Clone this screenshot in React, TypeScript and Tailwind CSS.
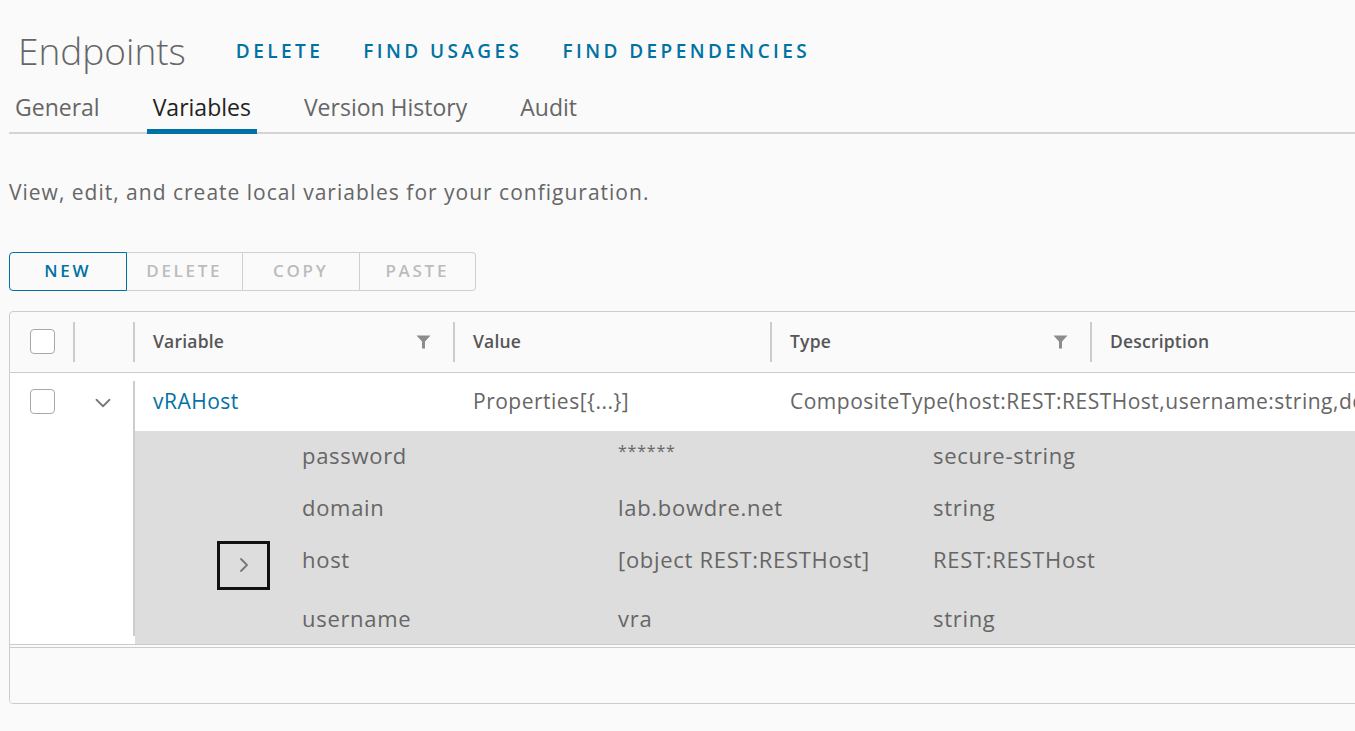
import { ChevronDown, ChevronRight } from 'lucide-react';

const font = { fontFamily: '"Open Sans", "Liberation Sans", sans-serif' };

const FilterIcon = () => (
  <svg width="15" height="14" viewBox="0 0 15 14" className="shrink-0">
    <path d="M0.5 0.5 H14.5 L9 6.5 V13.5 H6 V6.5 Z" fill="#8c8c8c" />
  </svg>
);

const Checkbox = () => (
  <div className="w-[25px] h-[25px] rounded-[4px] border border-[#a8a8a8] bg-white" />
);

const HeaderCell = ({ label, width, filter }: { label: string; width?: string; filter?: boolean }) => (
  <div className={`flex items-center h-full ${width ?? 'flex-1'}`}>
    <div className="w-[2px] h-[40px] bg-[#cccccc]" />
    <div className="flex-1 flex items-center justify-between pl-[18px] pr-[22px]">
      <span className="text-[17.5px] font-semibold text-[#565656] tracking-[0.2px]">{label}</span>
      {filter && <FilterIcon />}
    </div>
  </div>
);

const details = [
  { name: 'password', value: '******', type: 'secure-string', row: 'h-[48px] items-center' },
  { name: 'domain', value: 'lab.bowdre.net', type: 'string', row: 'h-[56px] items-center' },
  { name: 'host', value: '[object REST:RESTHost]', type: 'REST:RESTHost', row: 'h-[48px] items-center', expand: true },
  { name: 'username', value: 'vra', type: 'string', row: 'flex-1 items-start pt-[20px]' },
];

export default function App() {
  return (
    <div className="w-[1355px] h-[731px] overflow-hidden bg-[#fafafa] text-[#666666]" style={font}>
      {/* title bar */}
      <div className="flex items-center h-[70px] pt-[30px] pl-[18px]">
        <h1 className="text-[37px] font-light text-[#666666] leading-none mr-[50px]">Endpoints</h1>
        <div className="flex items-center gap-[40px] pt-[2px]">
          {['DELETE', 'FIND USAGES', 'FIND DEPENDENCIES'].map(t => (
            <span key={t} className="text-[19px] font-semibold tracking-[0.18em] text-[#0072a3]">
              {t}
            </span>
          ))}
        </div>
      </div>

      {/* tabs */}
      <div className="flex ml-[9px] mt-[14px] border-b-2 border-[#d4d4d4] h-[50px]">
        {['General', 'Variables', 'Version History', 'Audit'].map((t, i) => (
          <div
            key={t}
            className={`flex items-center px-[6px] mr-[41px] -mb-[2px] text-[23px] ${
              i === 1 ? 'border-b-[5px] border-[#0072a3] text-[#222222] pt-[1px]' : 'text-[#666666] pb-[4px]'
            }`}
          >
            {t}
          </div>
        ))}
      </div>

      <p className="ml-[9px] mt-[43px] text-[21px] tracking-[1px] text-[#666666]">
        View, edit, and create local variables for your configuration.
      </p>

      {/* button group */}
      <div className="flex ml-[9px] mt-[43px] h-[39px] w-[467px]">
        <div className="flex-1 flex items-center justify-center border border-[#0072a3] rounded-l-[4px] text-[17px] font-semibold tracking-[0.16em] text-[#0072a3]">
          NEW
        </div>
        {['DELETE', 'COPY', 'PASTE'].map((t, i) => (
          <div
            key={t}
            className={`flex-1 flex items-center justify-center border-y border-r border-[#d0d0d0] text-[17px] font-semibold tracking-[0.16em] text-[#bcbcbc] ${
              i === 2 ? 'rounded-r-[4px]' : ''
            }`}
          >
            {t}
          </div>
        ))}
      </div>

      {/* datagrid */}
      <div className="ml-[9px] mt-[20px] w-[1420px] h-[393px] border border-[#cccccc] rounded-[4px] overflow-hidden flex flex-col">
        <div className="flex items-center h-[61px] border-b border-[#cccccc] shrink-0">
          <div className="w-[63px] flex justify-center pl-[2px]">
            <Checkbox />
          </div>
          <HeaderCell label="" width="w-[60px]" />
          <HeaderCell label="Variable" width="w-[320px]" filter />
          <HeaderCell label="Value" width="w-[317px]" />
          <HeaderCell label="Type" width="w-[320px]" filter />
          <HeaderCell label="Description" />
        </div>

        {/* row */}
        <div className="flex h-[272px] bg-white border-b border-[#cccccc] shrink-0">
          <div className="w-[123px] flex items-start pt-[16px]">
            <div className="w-[63px] flex justify-center pl-[2px]">
              <Checkbox />
            </div>
            <div className="w-[60px] flex justify-center pt-[1px]">
              <ChevronDown size={26} strokeWidth={1.7} color="#7a7a7a" />
            </div>
          </div>
          <div className="w-[2px] mt-[8px] mb-[8px] bg-[#cccccc]" />
          <div className="flex-1 flex flex-col">
            <div className="flex items-center h-[58px] text-[21px] tracking-[0.5px] shrink-0">
              <div className="w-[318px] pl-[18px] text-[#0072a3]">vRAHost</div>
              <div className="w-[319px] pl-[20px]">Properties[{'{...}'}]</div>
              <div className="flex-1 pl-[18px] whitespace-nowrap overflow-hidden">
                CompositeType(host:REST:RESTHost,username:string,do
              </div>
            </div>
            <div className="flex-1 bg-[#dddddd] flex flex-col text-[22px] leading-[30px] tracking-[0.7px] text-[#666666]">
              {details.map(d => (
                <div key={d.name} className={`flex ${d.row}`}>
                  <div className="w-[167px] pl-[82px] self-stretch flex items-start">
                    {d.expand && (
                      <div className="w-[53px] h-[49px] mt-[6px] border-[3px] border-[#111111] flex items-center justify-center bg-[#dddddd]">
                        <ChevronRight size={24} strokeWidth={1.8} color="#777777" />
                      </div>
                    )}
                  </div>
                  <div className="w-[316px]">{d.name}</div>
                  <div className={`w-[315px] ${d.name === 'password' ? 'text-[16px] -mt-[8px] tracking-[0.05em]' : ''}`}>
                    {d.value}
                  </div>
                  <div className="flex-1">{d.type}</div>
                </div>
              ))}
            </div>
          </div>
        </div>

        <div className="h-[2px] shrink-0" />
        <div className="flex-1 border-t border-[#cccccc] bg-[#fafafa]" />
      </div>
    </div>
  );
}
